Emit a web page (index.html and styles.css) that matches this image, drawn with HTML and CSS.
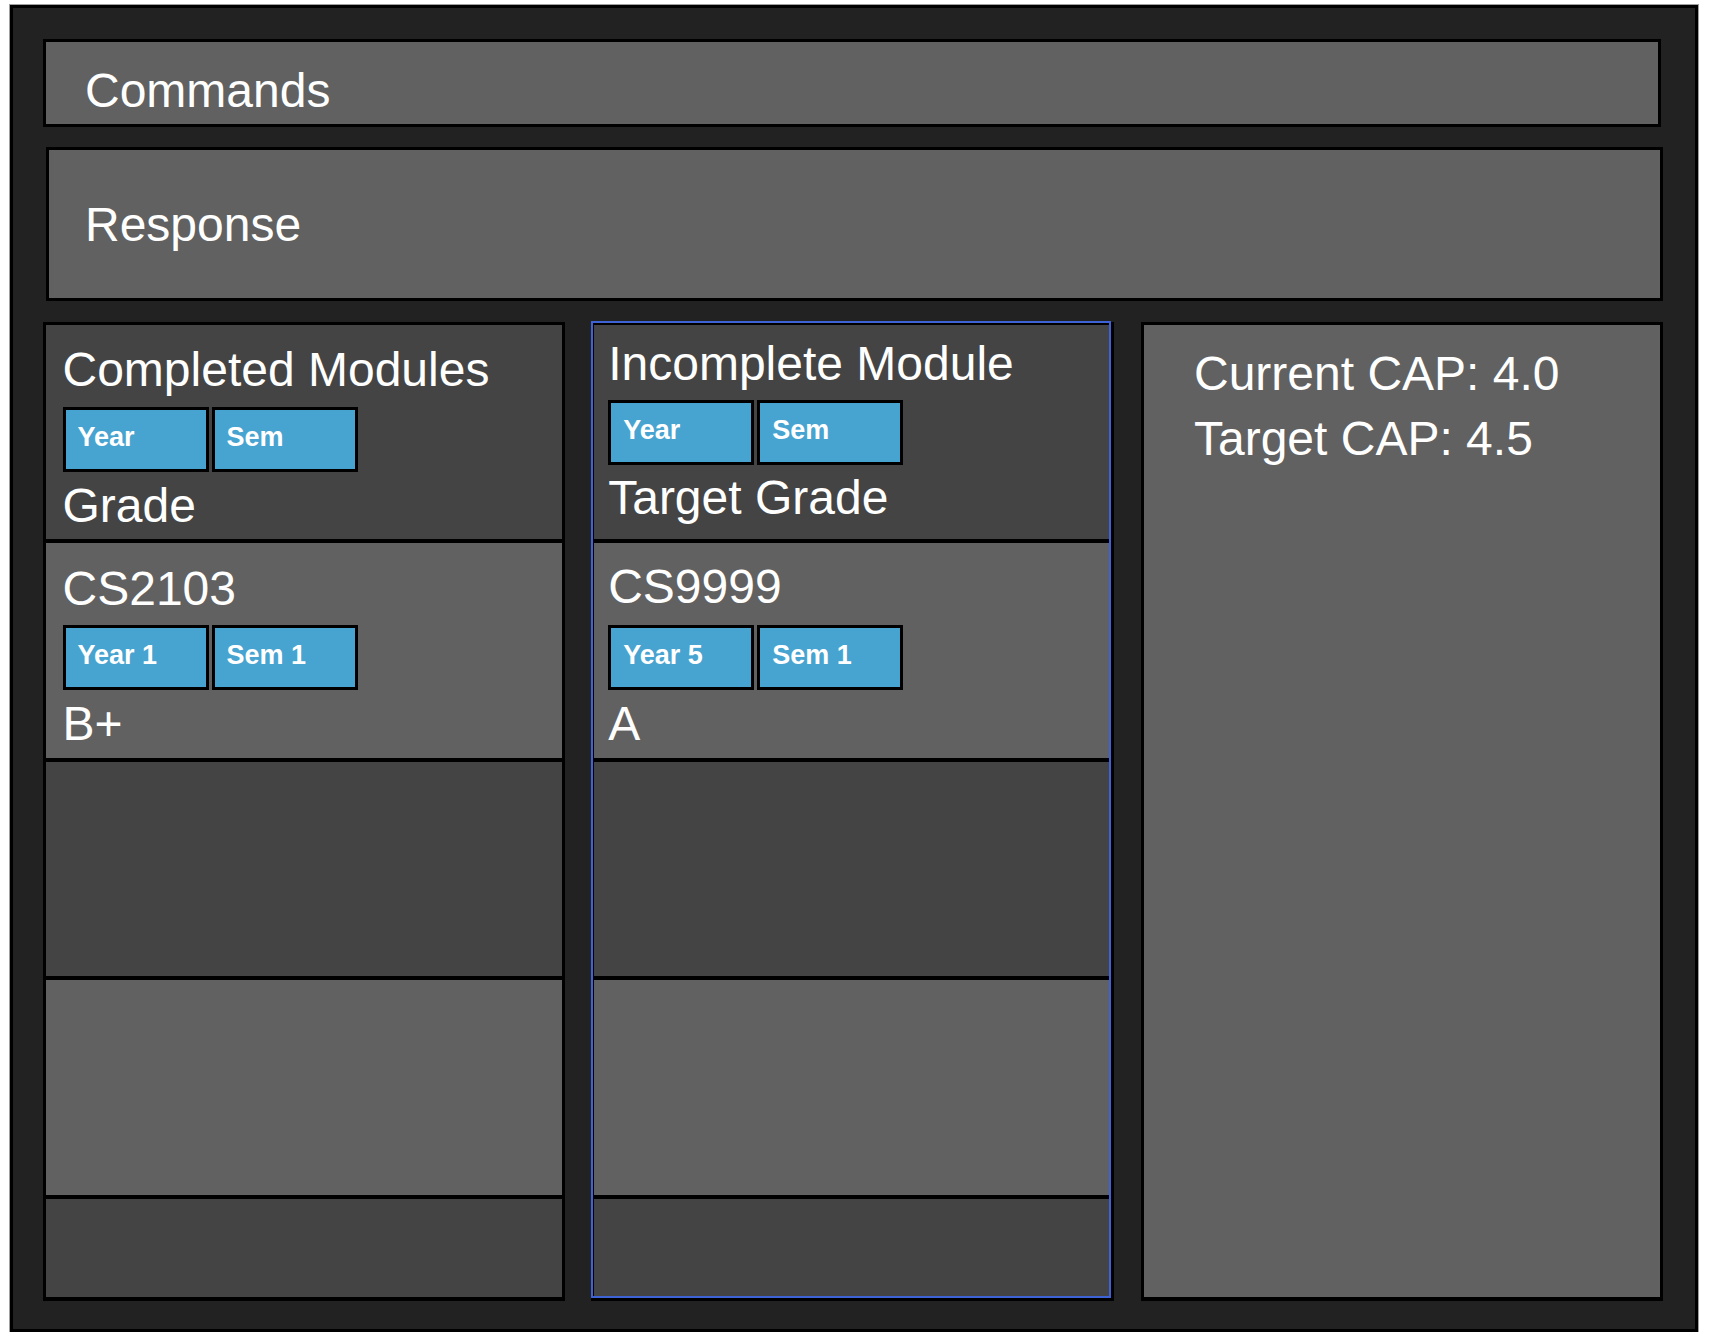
FILE: index.html
```html
<!DOCTYPE html>
<html lang="en">
<head>
<meta charset="utf-8">
<title>Modules</title>
<link rel="stylesheet" href="styles.css">
</head>
<body>
<div class="frame">
  <div class="bar commands"><div class="big">Commands</div></div>
  <div class="bar response"><div class="big">Response</div></div>
  <div class="columns">
    <section class="col col-completed">
      <div class="cell dark head">
        <div class="big">Completed Modules</div>
        <div class="tags"><span class="tag">Year</span><span class="tag">Sem</span></div>
        <div class="big grade">Grade</div>
      </div>
      <div class="cell light row">
        <div class="big">CS2103</div>
        <div class="tags"><span class="tag">Year 1</span><span class="tag">Sem 1</span></div>
        <div class="big grade">B+</div>
      </div>
      <div class="cell dark"></div>
      <div class="cell light"></div>
      <div class="cell dark last"></div>
    </section>
    <section class="col col-incomplete">
      <div class="cell dark head">
        <div class="big">Incomplete Module</div>
        <div class="tags"><span class="tag">Year</span><span class="tag">Sem</span></div>
        <div class="big grade">Target Grade</div>
      </div>
      <div class="cell light row">
        <div class="big">CS9999</div>
        <div class="tags"><span class="tag">Year 5</span><span class="tag">Sem 1</span></div>
        <div class="big grade">A</div>
      </div>
      <div class="cell dark"></div>
      <div class="cell light"></div>
      <div class="cell dark last"></div>
    </section>
    <section class="col col-cap">
      <div class="big">Current CAP: 4.0</div>
      <div class="big cap-second">Target CAP: 4.5</div>
    </section>
  </div>
</div>
</body>
</html>
```
FILE: styles.css
```css
* { box-sizing: border-box; }
html, body { margin: 0; background: #ffffff; }
body {
  font-family: "Liberation Sans", Arial, Helvetica, sans-serif;
  color: #ffffff;
}
.frame {
  margin: 5px 0 0 10px;
  width: 1688px;
  height: 1327px;
  background: #222222;
  border: 3px solid #000000;
  box-shadow: 0 0 0 1px #a0a0a0;
  display: flex;
  flex-direction: column;
  align-items: flex-start;
}
.big {
  font-size: 48px;
  line-height: 55px;
  white-space: nowrap;
}
.bar {
  background: #616161;
  border: 3px solid #000000;
  flex: none;
}
.commands {
  margin: 31px 0 0 30px;
  width: 1618px;
  height: 88px;
  padding: 21px 0 0 39px;
}
.response {
  margin: 20px 0 0 33px;
  width: 1617px;
  height: 154px;
  padding: 47px 0 0 36px;
}
.columns {
  display: flex;
  margin-top: 21px;
  height: 979px;
  flex: none;
}
.col {
  position: relative;
  height: 979px;
  border: 3px solid #000000;
  border-bottom-width: 4px;
  display: flex;
  flex-direction: column;
  flex: none;
}
.col-completed { margin-left: 29.5px; width: 522px; }
.col-incomplete { margin-left: 26.2px; width: 523px; }
.col-cap {
  margin-left: 27.3px;
  width: 522.4px;
  background: #616161;
  padding: 21px 0 0 50px;
}
.cap-second { margin-top: 10px; }
.col-incomplete::after {
  content: "";
  position: absolute;
  top: -4px;
  left: -3px;
  right: 0;
  bottom: -1px;
  border: 2px solid #3d63d6;
  pointer-events: none;
}
.cell {
  flex: none;
  height: 218.4px;
  border-bottom: 4px solid #000000;
}
.cell.last { flex: 1; border-bottom: 0; }
.light { background: #616161; }
.dark { background: #444444; }

.col-completed .cell { padding-left: 17px; }
.col-completed .head { padding-top: 17px; }
.col-completed .head .tags { margin-top: 10px; }
.col-completed .row { padding-top: 18px; }
.col-completed .row .tags { margin-top: 9px; }

.col-incomplete .cell { padding-left: 14.5px; }
.col-incomplete .head { padding-top: 11px; }
.col-incomplete .head .tags { margin-top: 9px; }
.col-incomplete .head .grade { margin-top: 5px; }
.col-incomplete .row { padding-top: 16px; }
.col-incomplete .row .tags { margin-top: 11px; }

.grade { margin-top: 6px; }
.tags {
  display: flex;
  gap: 3px;
}
.tag {
  width: 146px;
  height: 65px;
  border: 3px solid #000000;
  background: #47a3d0;
  display: flex;
  align-items: center;
  padding: 0 0 5px 12px;
  font-size: 27px;
  font-weight: bold;
  white-space: nowrap;
}
```
